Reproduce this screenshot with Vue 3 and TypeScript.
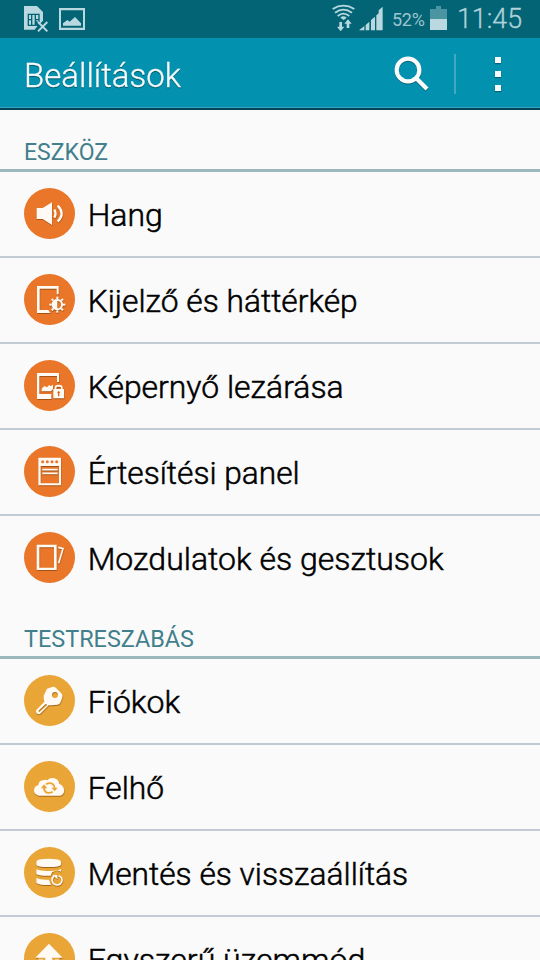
<script setup lang="ts">
type IconName = 'sound' | 'display' | 'lock' | 'panel' | 'motion' | 'key' | 'cloud' | 'backup' | 'easy'

interface Item {
  label: string
  icon: IconName
  width: number
}

interface Section {
  title: string
  tone: 'orange' | 'amber'
  width: number
  items: Item[]
}

const sections: Section[] = [
  {
    title: 'ESZKÖZ',
    tone: 'orange',
    width: 84,
    items: [
      { label: 'Hang', icon: 'sound', width: 75 },
      { label: 'Kijelző és háttérkép', icon: 'display', width: 270 },
      { label: 'Képernyő lezárása', icon: 'lock', width: 256 },
      { label: 'Értesítési panel', icon: 'panel', width: 212 },
      { label: 'Mozdulatok és gesztusok', icon: 'motion', width: 356 },
    ],
  },
  {
    title: 'TESTRESZABÁS',
    tone: 'amber',
    width: 170,
    items: [
      { label: 'Fiókok', icon: 'key', width: 92.5 },
      { label: 'Felhő', icon: 'cloud', width: 76.5 },
      { label: 'Mentés és visszaállítás', icon: 'backup', width: 320.5 },
      { label: 'Egyszerű üzemmód', icon: 'easy', width: 277.5 },
    ],
  },
]

const teeth: number[] = [0, 45, 90, 135, 180, 225, 270, 315]
</script>

<template>
  <div class="screen">
    <div class="status">
      <svg class="status-left" width="64" height="38" viewBox="0 0 192 114">
        <path d="M0 18H39L57 36V62L47 72L38 62L32 70L40 79L32 89H0Z" />
        <path class="cut" d="M11 43H47M11 76H38M13 41V78M45 41V66M23 43V76M34 43V76M11 59H23M34 59H46" />
        <path class="cross" d="M42 66L70 94M70 66L42 94" />
        <path fill-rule="evenodd" d="M105 24H183V90H105ZM111 31V83H177V31Z" />
        <path d="M117 77V70L130 60L137 65L153 51L171 70V77Z" />
      </svg>
      <div class="status-right">
        <svg class="signals" width="53" height="38" viewBox="0 0 159 114">
          <g class="wifi">
            <path d="M2 27Q34 7 67 27" />
            <path d="M9 38Q34 20 60 38" />
            <path d="M17 48Q34 34 52 48" />
          </g>
          <path d="M25 53Q34 45 44 53L35 60Z" />
          <path d="M22 66H30V80H37L26 94L15 80H22ZM44 84H52V71H59L48 58L37 71H44Z" />
          <path d="M81 91L97 78V91ZM101 75L112 65V91H101ZM117 60L129 50V91H117ZM133 46L145 36V91H133ZM140 31L152 20V91H140Z" />
        </svg>
        <span class="percent">52%</span>
        <svg class="battery" width="17" height="38" viewBox="0 0 51 114">
          <path class="faint" d="M0 27H18V18H33V27H51V57H0Z" />
          <path d="M0 57H51V90H0Z" />
        </svg>
        <svg class="clock" width="68" height="38">
          <text x="0" y="28" textLength="65" lengthAdjust="spacingAndGlyphs">11:45</text>
        </svg>
      </div>
    </div>

    <header class="bar">
      <svg class="title" width="170" height="69">
        <text x="0" y="49" textLength="157" lengthAdjust="spacingAndGlyphs">Beállítások</text>
      </svg>
      <div class="actions">
        <svg class="search" width="36" height="36" viewBox="0 0 108 108">
          <circle cx="42" cy="42" r="34" />
          <path d="M66 66L99 99" />
        </svg>
        <i class="divider"></i>
        <div class="more"><i></i><i></i><i></i></div>
      </div>
    </header>

    <main>
      <section v-for="section in sections" :key="section.title" :class="section.tone">
        <h2>
          <svg width="200" height="32">
            <text x="0" y="23" :textLength="section.width" lengthAdjust="spacingAndGlyphs">{{ section.title }}</text>
          </svg>
        </h2>
        <ul>
          <li v-for="item in section.items" :key="item.label">
            <span class="badge">
              <svg width="51" height="51" viewBox="0 0 153 153">
                <g v-if="item.icon === 'sound'">
                  <path d="M38 60H56L84 43V111L56 93H38Z" />
                  <path class="line" d="M91 65Q98 77 91 89M101 53Q125 77 101 101" />
                </g>
                <g v-else-if="item.icon === 'display'">
                  <path d="M39 36H104V61H98V44H47V108H73L79 117H39Z" />
                  <path fill-rule="evenodd" d="M100 75a17 17 0 1 0 .1 0ZM100 81V103A11 11 0 0 0 100 81Z" />
                  <path v-for="a in teeth" :key="a" d="M97 68H103V75H97Z" :transform="`rotate(${a} 100 92)`" />
                </g>
                <g v-else-if="item.icon === 'lock'">
                  <path d="M39 39H105V66H99V48H46V102H82V117H39Z" />
                  <path d="M53 94V86L61 78L69 82L76 75L80 79L87 74V87L81 94Z" />
                  <path fill-rule="evenodd" d="M88 87H92V82Q92 74 104 74Q116 74 116 82V87H120V115H88ZM97 87H111V83Q111 80 104 80Q97 80 97 83ZM104 94a4 4 0 0 0-2 7V109H106V101a4 4 0 0 0-2-7Z" />
                </g>
                <g v-else-if="item.icon === 'panel'">
                  <path fill-rule="evenodd" d="M43 35H111V118H43ZM50 60V112H105V60Z" />
                  <path class="thin" d="M55 71H101M55 82H101" />
                  <circle v-for="x in [56, 70, 84, 98]" :key="x" class="hole" :cx="x" cy="47" r="4.5" />
                </g>
                <g v-else-if="item.icon === 'motion'">
                  <path fill-rule="evenodd" d="M38 38H98V114H38ZM46 46V107H90V46Z" />
                  <path class="thin" d="M103 46L117 50L104 94" />
                </g>
                <g v-else-if="item.icon === 'key'">
                  <path fill-rule="evenodd" d="M69 41L87 35Q92 35 96 39L112 55Q117 60 115 67L110 81Q108 87 101 89L83 91L74 91L48 117Q43 119 38 115Q34 110 37 105L61 80L59 71V62ZM84 60a9 9 0 1 0 18 0a9 9 0 1 0-18 0ZM43 108L65 87L70 90L46 112Z" />
                </g>
                <g v-else-if="item.icon === 'cloud'">
                  <path d="M44 104Q30 101 30 88Q31 75 43 73Q44 60 56 58Q64 55 70 58Q78 49 91 52Q104 56 106 68Q116 72 119 81Q124 100 109 104Z" />
                  <path class="cut" d="M66 70Q77 63 86 69Q92 74 92 82M60 80Q60 90 67 94Q76 98 86 92" />
                  <path class="hole" d="M51 82L60 70L70 82ZM82 80H101L92 91Z" />
                </g>
                <g v-else-if="item.icon === 'backup'">
                  <path d="M37 44Q37 35 74 35Q111 35 111 44V53Q109 60 74 60Q38 60 37 53Z" />
                  <path d="M37 67Q55 75 90 71Q82 75 80 86Q42 87 37 80Z" />
                  <path d="M37 93Q50 100 75 98L81 114Q43 115 37 107Z" />
                  <path d="M85 75Q97 66 111 74V66Q103 71 90 71Z" />
                  <path class="thin" d="M104 86Q115 90 114 101Q110 114 99 114Q86 113 84 101Q84 92 90 87" />
                  <path d="M86 84H100V97Z" />
                </g>
                <g v-else>
                  <path d="M75 32L116 74H106V115H44V74H34Z" />
                  <path class="cut" d="M44 77H64M60 77V110M84 77H106M90 77V110" />
                </g>
              </svg>
            </span>
            <svg class="label" width="440" height="84">
              <text x="0.7" y="54" :textLength="item.width" lengthAdjust="spacingAndGlyphs">{{ item.label }}</text>
            </svg>
          </li>
        </ul>
      </section>
    </main>
  </div>
</template>

<style>
body {
  margin: 0;
}
</style>

<style scoped>
.screen {
  width: 540px;
  height: 960px;
  overflow: hidden;
  background: #fafafa;
  font-family: Roboto, 'Noto Sans', sans-serif;
}
svg {
  display: block;
  flex: none;
}
.status {
  display: flex;
  justify-content: space-between;
  height: 38px;
  padding: 0 15px 0 24px;
  background: #026475;
  fill: #b9d8df;
}
.status-left .cut {
  fill: none;
  stroke: #026475;
  stroke-width: 4;
}
.cross {
  fill: none;
  stroke: #b9d8df;
  stroke-width: 6;
}
.status-right {
  display: flex;
}
.wifi {
  fill: none;
  stroke: #b9d8df;
  stroke-width: 5.5;
}
.percent {
  width: 35px;
  margin-left: 7px;
  margin-right: 3px;
  font-size: 18px;
  line-height: 40px;
  letter-spacing: -0.3px;
  color: #9cc5ce;
}
.faint {
  fill: #4b95a2;
}
.clock {
  margin-left: 10px;
  font-size: 27px;
  font-weight: 300;
  fill: #b0d2d9;
  stroke: #b0d2d9;
  stroke-width: 0.3px;
}
.bar {
  display: flex;
  justify-content: space-between;
  box-sizing: border-box;
  height: 72px;
  padding: 0 39px 0 24px;
  background: #0291ae;
  border-bottom: 2px solid #034456;
  box-shadow: inset 0 -1px #39a6be;
}
.title {
  font-size: 33.5px;
  font-weight: 300;
  fill: #f7fbfc;
  stroke: #f7fbfc;
  stroke-width: 0.35px;
  filter: drop-shadow(0 1px 0.5px #025868);
}
.actions {
  display: flex;
  align-items: center;
}
.search {
  margin-top: 2px;
  fill: none;
  stroke: #fafafa;
  stroke-width: 12.5;
  filter: drop-shadow(0 1px 0.5px #026478);
}
.divider {
  width: 2px;
  height: 40px;
  margin: 2px 39px 0 24px;
  background: #42aabf;
}
.more {
  display: flex;
  flex-direction: column;
  gap: 8px;
  margin-top: 2px;
}
.more i {
  width: 6px;
  height: 6px;
  background: #fafafa;
  box-shadow: 0 1px 1px #026478;
}
main {
  padding-top: 3px;
}
h2 {
  box-sizing: border-box;
  height: 59px;
  margin: 0;
  padding: 24px 0 0 24px;
  border-bottom: 3px solid #9bb9bd;
  font-size: 23.5px;
  font-weight: 400;
  fill: #427f8c;
}
ul {
  margin: 0;
  padding: 0;
  list-style: none;
}
li {
  display: flex;
  align-items: center;
  height: 84px;
  padding-left: 24px;
  border-bottom: 2px solid #c2cad3;
}
.orange li:last-child {
  border-bottom: 0;
}
.badge {
  width: 51px;
  height: 51px;
  margin: 0 12px 1px 0;
  border-radius: 50%;
  background: var(--tone);
}
.orange {
  --tone: #e97629;
}
.amber {
  --tone: #eaa537;
}
.badge svg {
  fill: #fffaf4;
}
.badge g {
  filter: drop-shadow(1px 3px 1px rgba(110, 55, 0, 0.55));
}
.badge .line {
  fill: none;
  stroke: #fffaf4;
  stroke-width: 7;
}
.badge .thin {
  fill: none;
  stroke: #fffaf4;
  stroke-width: 5;
}
.badge .cut {
  fill: none;
  stroke: var(--tone);
  stroke-width: 5.5;
}
.badge .hole {
  fill: var(--tone);
}
.label {
  font-size: 32px;
  font-weight: 300;
  fill: #000;
  stroke: #000;
  stroke-width: 0.5px;
}
</style>
